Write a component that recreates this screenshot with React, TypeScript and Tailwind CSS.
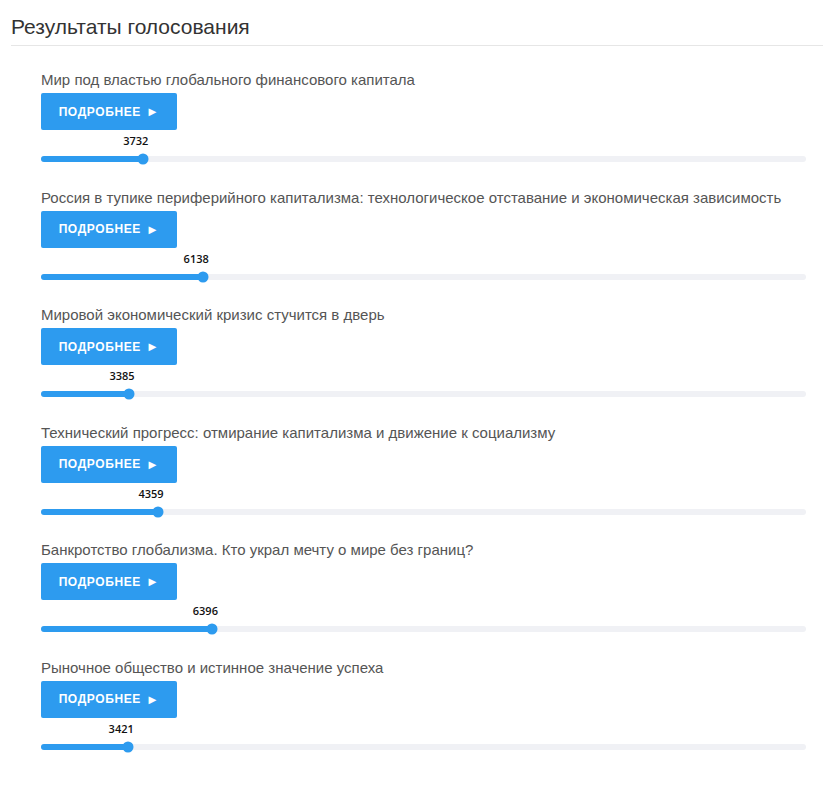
import React from "react";

type Result = { title: string; votes: number; pct: number };

const results: Result[] = [
  { title: "Мир под властью глобального финансового капитала", votes: 3732, pct: 13.3 },
  {
    title:
      "Россия в тупике периферийного капитализма: технологическое отставание и экономическая зависимость",
    votes: 6138,
    pct: 21.2,
  },
  { title: "Мировой экономический кризис стучится в дверь", votes: 3385, pct: 11.5 },
  { title: "Технический прогресс: отмирание капитализма и движение к социализму", votes: 4359, pct: 15.3 },
  { title: "Банкротство глобализма. Кто украл мечту о мире без границ?", votes: 6396, pct: 22.4 },
  { title: "Рыночное общество и истинное значение успеха", votes: 3421, pct: 11.4 },
];

function ResultRow({ item }: { item: Result }) {
  return (
    <div className="flex flex-col">
      <div className="text-[15px] leading-[20px] text-[#555]">{item.title}</div>
      <button
        type="button"
        className="mt-[3px] h-[37px] w-[136px] rounded-[2px] bg-[#2d9bef] text-white text-[12px] font-bold tracking-[0.6px] uppercase flex items-center justify-center gap-[5px]"
      >
        Подробнее <span className="text-[13px] leading-none">►</span>
      </button>
      {/* label + bar */}
      <div className="relative mt-[4px] h-[14px]">
        <span
          className="absolute top-0 -translate-x-1/2 text-[11px] leading-[14px] font-semibold text-[#111] font-['Open_Sans',sans-serif]"
          style={{ left: `calc(${item.pct}% - 7px)` }}
        >
          {item.votes}
        </span>
      </div>
      <div className="relative mt-[8px] h-[6px] rounded-full bg-[#f0f1f5]">
        <div className="h-full rounded-full bg-[#2d9bef]" style={{ width: `${item.pct}%` }} />
        <div
          className="absolute top-1/2 h-[11px] w-[11px] -translate-x-1/2 -translate-y-1/2 rounded-full bg-[#2d9bef]"
          style={{ left: `${item.pct}%` }}
        />
      </div>
    </div>
  );
}

export default function App() {
  return (
    <div className="min-h-screen bg-white font-['Liberation_Sans',Arial,sans-serif]">
      <div className="ml-[11px] border-b border-[#e6e6e6] pt-[13px] pb-[5px]">
        <h2 className="text-[21px] leading-[27px] text-[#333]">Результаты голосования</h2>
      </div>
      <div className="pl-[41px] pr-[17px] pt-[24px] flex flex-col gap-[25.5px]">
        {results.map((r) => (
          <ResultRow key={r.votes} item={r} />
        ))}
      </div>
    </div>
  );
}
